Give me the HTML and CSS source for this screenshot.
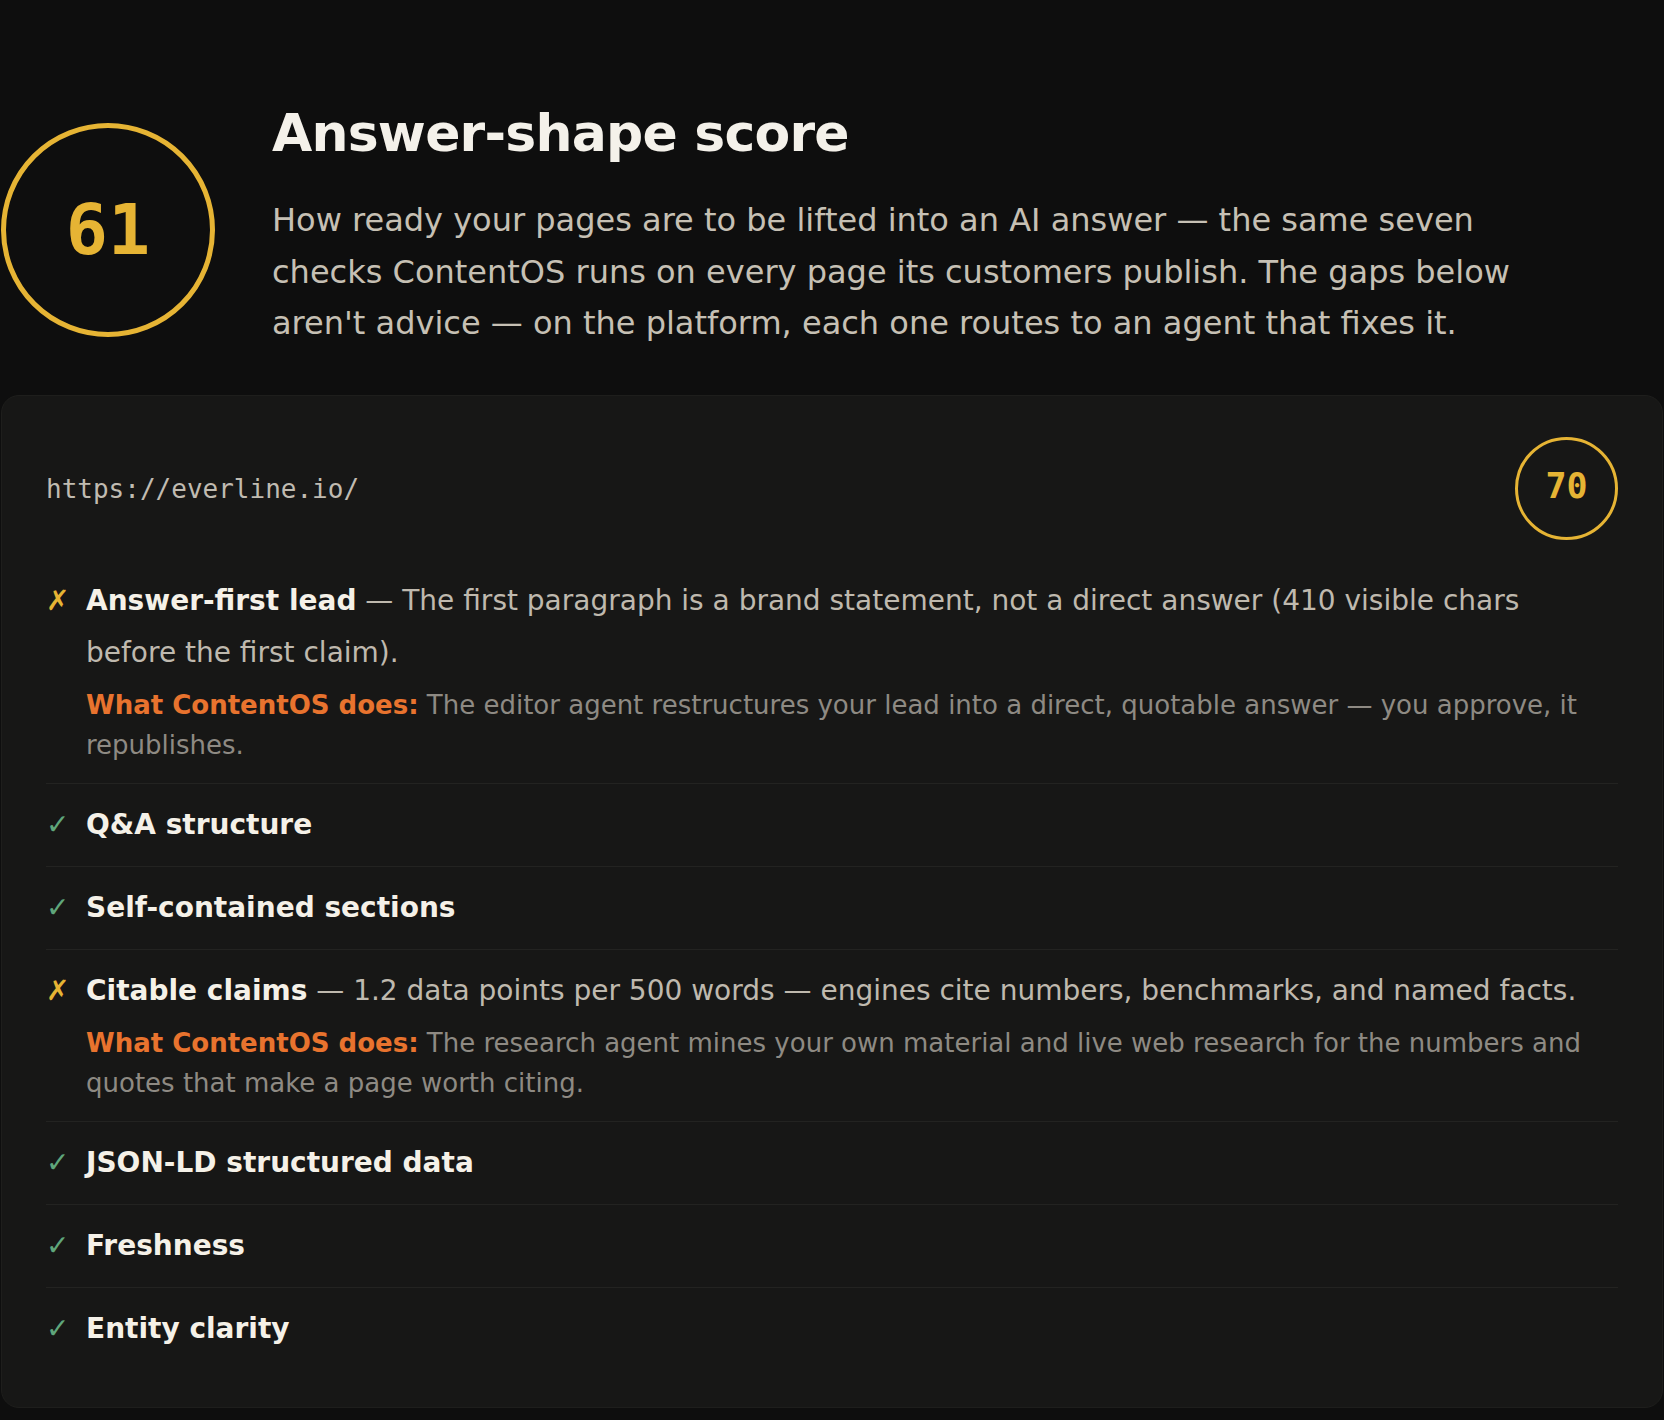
FILE: index.html
```html
<!DOCTYPE html>
<html lang="en">
<head>
    <meta charset="UTF-8">
    <meta name="viewport" content="width=device-width, initial-scale=1.0">
    <title>Answer-shape score</title>
    <link rel="stylesheet" href="styles.css">
</head>
<body>
    <div class="page">
        <div class="intro">
            <div class="score-ring">61</div>
            <div class="intro-text">
                <h1 class="title">Answer-shape score</h1>
                <p class="lede">How ready your pages are to be lifted into an AI answer — the same seven checks ContentOS runs on every page its customers publish. The gaps below aren't advice — on the platform, each one routes to an agent that fixes it.</p>
            </div>
        </div>

        <div class="card">
            <div class="card-head">
                <span class="page-url">https://everline.io/</span>
                <div class="page-score">70</div>
            </div>

            <ul class="checks">
                <li class="check">
                    <span class="mark fail">✗</span>
                    <div class="check-body">
                        <div class="check-line"><strong>Answer-first lead</strong> — The first paragraph is a brand statement, not a direct answer (410 visible chars before the first claim).</div>
                        <div class="fix"><span class="fix-label">What ContentOS does:</span> The editor agent restructures your lead into a direct, quotable answer — you approve, it republishes.</div>
                    </div>
                </li>
                <li class="check">
                    <span class="mark pass">✓</span>
                    <div class="check-body">
                        <div class="check-line"><strong>Q&amp;A structure</strong></div>
                    </div>
                </li>
                <li class="check">
                    <span class="mark pass">✓</span>
                    <div class="check-body">
                        <div class="check-line"><strong>Self-contained sections</strong></div>
                    </div>
                </li>
                <li class="check">
                    <span class="mark fail">✗</span>
                    <div class="check-body">
                        <div class="check-line"><strong>Citable claims</strong> — 1.2 data points per 500 words — engines cite numbers, benchmarks, and named facts.</div>
                        <div class="fix"><span class="fix-label">What ContentOS does:</span> The research agent mines your own material and live web research for the numbers and quotes that make a page worth citing.</div>
                    </div>
                </li>
                <li class="check">
                    <span class="mark pass">✓</span>
                    <div class="check-body">
                        <div class="check-line"><strong>JSON-LD structured data</strong></div>
                    </div>
                </li>
                <li class="check">
                    <span class="mark pass">✓</span>
                    <div class="check-body">
                        <div class="check-line"><strong>Freshness</strong></div>
                    </div>
                </li>
                <li class="check">
                    <span class="mark pass">✓</span>
                    <div class="check-body">
                        <div class="check-line"><strong>Entity clarity</strong></div>
                    </div>
                </li>
            </ul>
        </div>
    </div>
</body>
</html>
```

FILE: styles.css
```css
html {
    background-color: #0e0e0e;
}

body {
    margin: 0;
    font-family: "DejaVu Sans", Verdana, sans-serif;
    background-color: #0e0e0e;
    color: #c8c2b6;
}

.page {
    padding: 106px 1px 12px 1px;
}

/* top block: big score + copy */
.intro {
    display: flex;
    align-items: center;
    gap: 57px;
    margin-bottom: 46px;
}

.score-ring {
    flex: 0 0 214px;
    height: 214px;
    margin-top: 4px;
    box-sizing: border-box;
    border: 5px solid #e6b434;
    border-radius: 50%;
    display: flex;
    justify-content: center;
    align-items: center;
    font-family: "DejaVu Sans Mono", monospace;
    font-weight: bold;
    font-size: 70px;
    color: #e6b434;
}

.title {
    margin: 0 0 34.8px 0;
    font-size: 52px;
    line-height: 1.05;
    letter-spacing: -0.015em;
    font-weight: bold;
    color: #f4f1ea;
}

.lede {
    margin: 0;
    max-width: 1280px;
    font-size: 32px;
    line-height: 51.2px;
    color: #c6c0b4;
}

/* page card */
.card {
    background-color: #171716;
    border: 1px solid #1e1e1c;
    border-radius: 18px;
    padding: 41px 44px 37px 44px;
}

.card-head {
    display: flex;
    justify-content: space-between;
    align-items: center;
    margin-bottom: 20px;
}

.page-url {
    font-family: "DejaVu Sans Mono", monospace;
    font-size: 26px;
    color: #c0bbb1;
}

.page-score {
    width: 103px;
    height: 103px;
    box-sizing: border-box;
    padding-bottom: 5px;
    border: 3px solid #e6b434;
    border-radius: 50%;
    display: flex;
    justify-content: center;
    align-items: center;
    font-family: "DejaVu Sans Mono", monospace;
    font-weight: bold;
    font-size: 35px;
    color: #e6b434;
}

.checks {
    list-style: none;
    margin: 0;
    padding: 0;
}

.check {
    display: flex;
    padding: 15px 0;
    border-bottom: 1px solid #232321;
}

.check:last-child {
    border-bottom: none;
}

.mark {
    flex: 0 0 40px;
    font-size: 28px;
    font-weight: bold;
    line-height: 52px;
}

.mark.fail {
    color: #e6b434;
}

.mark.pass {
    color: #5fa67b;
}

.check-body {
    flex: 1;
    min-width: 0;
}

.check-line {
    font-size: 28px;
    line-height: 52px;
    color: #bfb9ae;
}

.check-line strong {
    color: #f5f1e8;
}

.fix {
    margin: 6px 0 3px 0;
    font-size: 26px;
    line-height: 40px;
    color: #8e8a83;
}

.fix-label {
    font-weight: bold;
    color: #e8732e;
}
```
